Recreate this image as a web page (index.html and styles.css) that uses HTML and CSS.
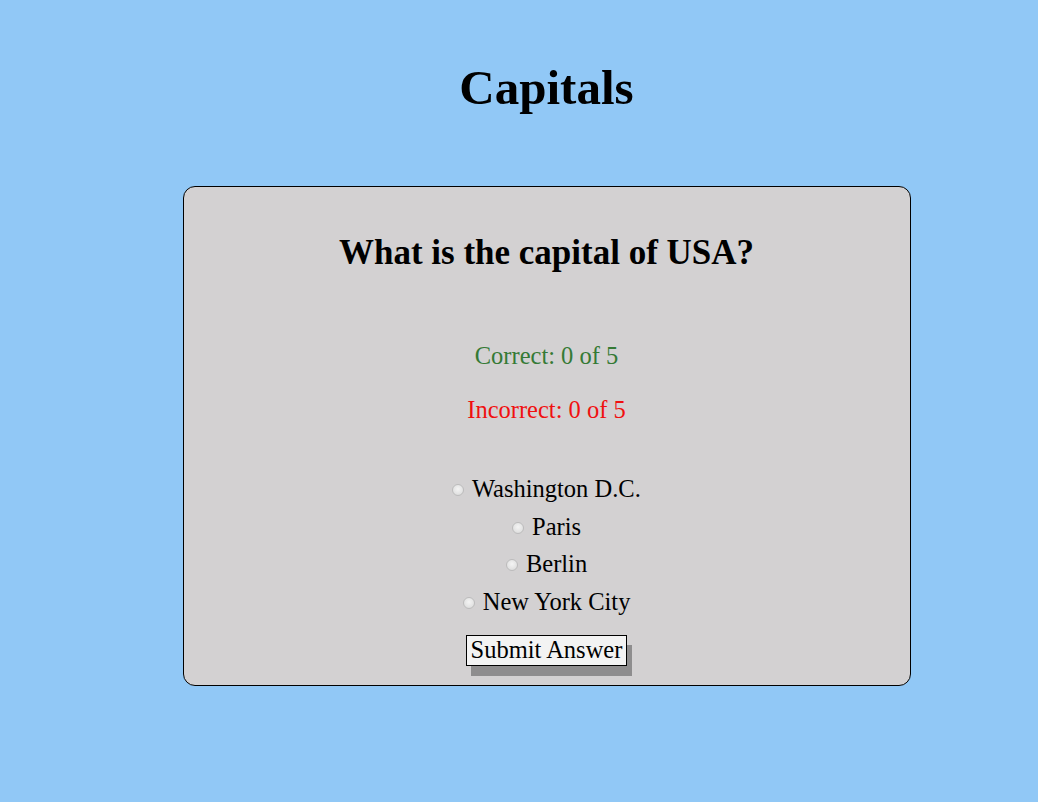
FILE: index.html
```html
<!DOCTYPE html>
<html>
<head>
<meta charset="utf-8">
<link rel="stylesheet" href="styles.css">
</head>
<body>
<div class="page">
  <h1 class="title">Capitals</h1>
  <div class="card">
    <h2 class="question">What is the capital of USA?</h2>
    <p class="score correct">Correct: 0 of 5</p>
    <p class="score incorrect">Incorrect: 0 of 5</p>
    <div class="options">
      <label class="option"><input type="radio" name="a" class="radio"> Washington D.C.</label>
      <label class="option"><input type="radio" name="a" class="radio"> Paris</label>
      <label class="option"><input type="radio" name="a" class="radio"> Berlin</label>
      <label class="option"><input type="radio" name="a" class="radio"> New York City</label>
    </div>
    <button class="submit">Submit Answer</button>
  </div>
</div>
</body>
</html>
```
FILE: styles.css
```css
html, body {
  margin: 0;
  padding: 0;
  background: #91c8f6;
  height: 100%;
}
body {
  font-family: "Liberation Serif", "Times New Roman", serif;
  color: #000;
}
.page {
  padding-left: 55px;
  display: flex;
  flex-direction: column;
  align-items: center;
}
.title {
  margin: 60px 0 0;
  font-size: 49px;
  line-height: 56px;
  font-weight: bold;
}
.card {
  margin-top: 70px;
  width: 726px;
  background: #d3d1d2;
  border: 1px solid #000;
  border-radius: 12px;
  padding: 46px 0 19px;
  display: flex;
  flex-direction: column;
  align-items: center;
}
.question {
  margin: 0;
  font-size: 35px;
  line-height: 40px;
  font-weight: bold;
}
.score {
  margin: 0;
  font-size: 24.5px;
  line-height: 28px;
}
.correct {
  margin-top: 69px;
  color: #357a35;
}
.incorrect {
  margin-top: 26px;
  color: #f01010;
}
.options {
  margin-top: 46px;
  display: flex;
  flex-direction: column;
  align-items: center;
}
.option {
  display: block;
  font-size: 24.5px;
  line-height: 37.7px;
  text-align: center;
  white-space: nowrap;
}
.radio {
  appearance: none;
  -webkit-appearance: none;
  display: inline-block;
  width: 12px;
  height: 12px;
  margin: 0 2px 0 0;
  border: 1px solid #bcbcbc;
  border-radius: 50%;
  background: radial-gradient(circle at 50% 40%, #f4f4f4 0%, #e2e2e2 65%, #d4d4d4 100%);
  vertical-align: baseline;
  position: relative;
  top: -1px;
}
.submit {
  margin-top: 14px;
  font-family: "Liberation Serif", "Times New Roman", serif;
  font-size: 24.5px;
  line-height: 27px;
  padding: 0 4px 2px;
  border: 1px solid #000;
  border-radius: 0;
  background: #f3f3f3;
  color: #000;
  box-shadow: 5px 10px 0 #8e8d8e;
}
```
